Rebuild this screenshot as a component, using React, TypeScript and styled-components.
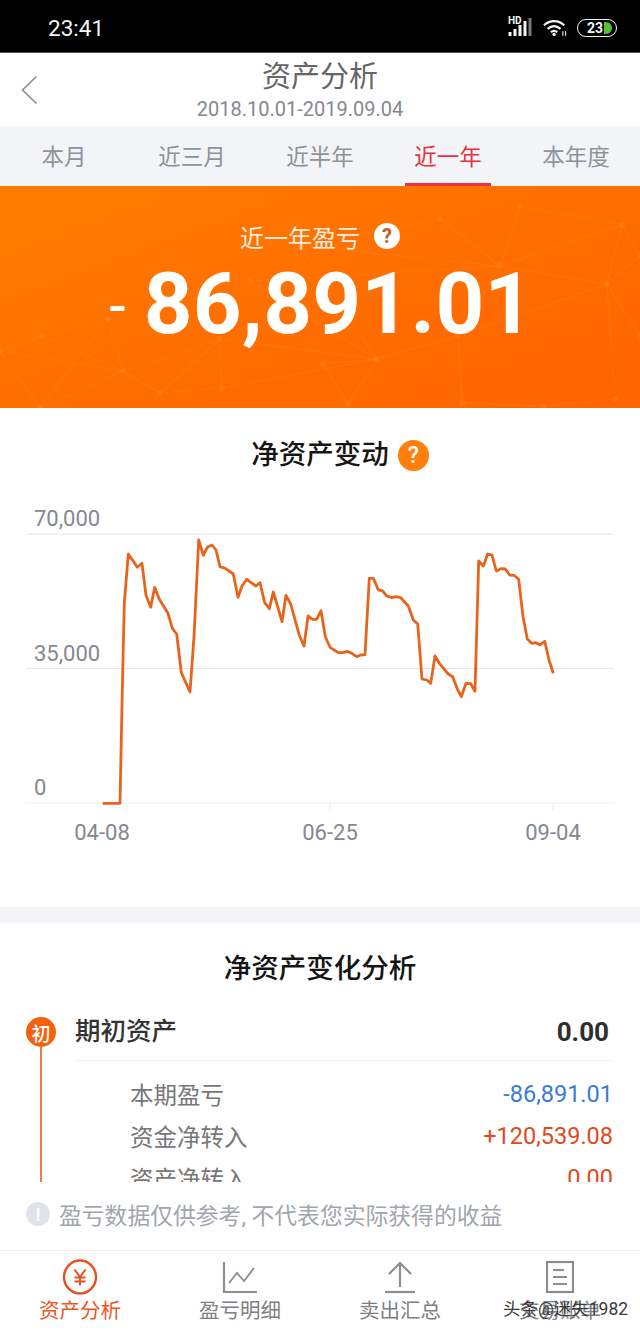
import styled, { createGlobalStyle } from "styled-components";

const GlobalStyle = createGlobalStyle`
  html, body {
    margin: 0;
    padding: 0;
    background: #fff;
  }
  body {
    font-family: Roboto, "Noto Sans CJK SC", sans-serif;
  }
  * {
    box-sizing: border-box;
  }
`;

const Page = styled.div`
  position: relative;
  width: 640px;
  height: 1332px;
  display: flex;
  flex-direction: column;
  overflow: hidden;
  background: #fff;
`;

const StatusBar = styled.div`
  height: 53px;
  flex: none;
  display: flex;
  align-items: center;
  justify-content: space-between;
  padding: 3px 23px 0 48px;
  background: #000;
  border-bottom: 1px solid #55565a;
  color: #f4f4f4;
`;

const Clock = styled.span`
  font-size: 22.5px;
`;

const StatusIcons = styled.div`
  display: flex;
  align-items: center;
  gap: 10px;
`;

const Signal = styled.div`
  position: relative;
  width: 25px;
  height: 19px;
`;

const HdMark = styled.span`
  position: absolute;
  left: 0;
  top: -2px;
  font-size: 10px;
  font-weight: 700;
  line-height: 9px;
`;

const Battery = styled.div`
  width: 40px;
  height: 18px;
  display: flex;
  align-items: center;
  gap: 1px;
  padding: 0 2px 0 9px;
  border: 1.5px solid #f4f4f4;
  border-radius: 9px;
  font-size: 14px;
  font-weight: 700;
  line-height: 1;
`;

const BatteryCap = styled.i`
  width: 8px;
  height: 12px;
  border-radius: 0 6px 6px 0;
  background: #52c22f;
`;

const Header = styled.header`
  position: relative;
  flex: none;
  height: 73px;
  display: flex;
  flex-direction: column;
  align-items: center;
  padding-top: 6px;
`;

const BackButton = styled.svg`
  position: absolute;
  left: 21px;
  top: 22px;
`;

const PageTitle = styled.h1`
  margin: 0;
  font-size: 29px;
  font-weight: 400;
  line-height: 36px;
  color: #666;
`;

const DateRange = styled.div`
  margin-top: 1px;
  padding-right: 40px;
  font-size: 20px;
  line-height: 26px;
  color: #85888f;
`;

const Tabs = styled.nav`
  flex: none;
  height: 60px;
  display: grid;
  grid-template-columns: repeat(5, 1fr);
  background: #f2f4f8;
`;

const Tab = styled.div<{ $active?: boolean }>`
  position: relative;
  display: flex;
  align-items: center;
  justify-content: center;
  padding-bottom: 3px;
  font-size: 22.5px;
  color: ${(p) => (p.$active ? "#e5323e" : "#8e929a")};

  &::after {
    content: "";
    display: ${(p) => (p.$active ? "block" : "none")};
    position: absolute;
    left: 21px;
    right: 21px;
    bottom: 0;
    height: 3px;
    background: #f0303c;
  }
`;

const Scroller = styled.main`
  flex: 1;
  min-height: 0;
  overflow: hidden;
`;

const Banner = styled.section`
  position: relative;
  height: 222px;
  overflow: hidden;
  display: flex;
  flex-direction: column;
  align-items: center;
  padding-top: 32px;
  background: linear-gradient(160deg, #ff7c00 0%, #ff6c00 60%, #ff6400 100%);
  color: #fff;
`;

const BannerMesh = styled.svg`
  position: absolute;
  inset: 0;
`;

const BannerLabel = styled.div`
  position: relative;
  display: flex;
  align-items: center;
  gap: 14px;
  height: 36px;
  font-size: 24px;
  color: #ffeedd;
`;

const BannerHelp = styled.span`
  width: 26px;
  height: 26px;
  display: flex;
  align-items: center;
  justify-content: center;
  border-radius: 50%;
  background: #fff;
  color: #c8551a;
  font-size: 20px;
  font-weight: 700;
`;

const Amount = styled.div`
  position: relative;
  display: flex;
  align-items: center;
  gap: 17px;
  margin-top: 4px;
  height: 92px;
  padding-left: 2px;
`;

const AmountSign = styled.span`
  font-size: 54px;
  font-weight: 500;
  line-height: 1;
  margin-top: 5px;
`;

const AmountValue = styled.span`
  font-size: 85px;
  font-weight: 700;
  line-height: 1;
  letter-spacing: 0.35px;
`;

const ChartCard = styled.section`
  height: 515px;
  padding-top: 27px;
  border-bottom: 16px solid #f4f5f8;
`;

const SectionTitle = styled.h2`
  position: relative;
  width: max-content;
  margin: 0 auto;
  font-size: 27.5px;
  font-weight: 500;
  line-height: 40px;
  color: #151515;
`;

const TitleHelp = styled.span`
  position: absolute;
  left: 100%;
  top: 5px;
  margin-left: 9px;
  width: 31px;
  height: 31px;
  display: flex;
  align-items: center;
  justify-content: center;
  border-radius: 50%;
  background: #ff7f0a;
  color: #fff;
  font-size: 23px;
  font-weight: 500;
`;

const ChartSvg = styled.svg`
  display: block;
  margin-top: 15px;
`;

const AxisText = styled.text`
  font-family: Roboto, sans-serif;
  font-size: 22px;
  fill: #85888f;
`;

const AnalysisCard = styled.section`
  padding-top: 26px;
`;

const Timeline = styled.div`
  display: flex;
  gap: 19px;
  margin-top: 28px;
  padding: 0 26px;
`;

const Rail = styled.div`
  flex: none;
  width: 30px;
  display: flex;
  flex-direction: column;
  align-items: center;
`;

const RailBadge = styled.span`
  flex: none;
  width: 30px;
  height: 30px;
  display: flex;
  align-items: center;
  justify-content: center;
  border-radius: 50%;
  background: #f4620f;
  color: #fff;
  font-size: 19px;
  font-weight: 500;
`;

const RailLine = styled.i`
  flex: 1;
  width: 2px;
  background: #f27a4a;
`;

const TimelineBody = styled.div`
  flex: 1;
  min-width: 0;
`;

const OpeningRow = styled.div`
  height: 44px;
  display: flex;
  justify-content: space-between;
  align-items: flex-start;
  padding-right: 5px;
  border-bottom: 1px solid #f0f0f2;
`;

const OpeningLabel = styled.span`
  font-size: 25.5px;
  font-weight: 500;
  line-height: 28px;
  color: #333;
`;

const OpeningValue = styled.span`
  font-size: 26px;
  font-weight: 700;
  line-height: 30px;
  color: #2e2e2e;
`;

const DetailList = styled.div`
  padding: 12px 1px 0 55px;
`;

const DetailRow = styled.div`
  height: 42px;
  display: flex;
  justify-content: space-between;
  align-items: center;
`;

const DetailLabel = styled.span`
  font-size: 23.5px;
  color: #777;
`;

const DetailValue = styled.span<{ $tone: "loss" | "gain" }>`
  font-size: 23.5px;
  color: ${(p) => (p.$tone === "loss" ? "#3a7dd0" : "#e04a1c")};
`;

const Notice = styled.div`
  flex: none;
  height: 68px;
  display: flex;
  align-items: center;
  gap: 9px;
  padding: 0 26px 4px;
`;

const NoticeIcon = styled.span`
  width: 24px;
  height: 24px;
  display: flex;
  align-items: center;
  justify-content: center;
  border-radius: 50%;
  background: #dfe3ec;
  color: #fff;
  font-size: 18px;
  font-weight: 700;
`;

const NoticeText = styled.span`
  font-size: 22.8px;
  color: #a1a5ae;
`;

const BottomNav = styled.nav`
  position: relative;
  flex: none;
  height: 82px;
  display: grid;
  grid-template-columns: repeat(4, 1fr);
  border-top: 1px solid #f1f1f3;
`;

const NavItem = styled.div<{ $active?: boolean }>`
  display: flex;
  flex-direction: column;
  align-items: center;
  padding-top: 8px;
  color: ${(p) => (p.$active ? "#e8561c" : "#7d7f84")};
  font-size: 20.5px;
  line-height: 28px;

  svg {
    display: block;
    margin-bottom: 2px;
  }
`;

const Watermark = styled.span`
  position: absolute;
  left: 503px;
  top: 44px;
  font-size: 17.5px;
  line-height: 28px;
  color: #3a3a3a;
  white-space: nowrap;
`;

const tabs = ["本月", "近三月", "近半年", "近一年", "本年度"];

const details: { label: string; value: string; tone: "loss" | "gain" }[] = [
  { label: "本期盈亏", value: "-86,891.01", tone: "loss" },
  { label: "资金净转入", value: "+120,539.08", tone: "gain" },
  { label: "资产净转入", value: "0.00", tone: "gain" },
];

// traced from the chart, in 3x zoom units of the 640 wide picture
const rawPoints = [
  [308, 940], [360, 940], [367, 600], [373, 340], [385, 192], [412, 232], [426, 220], [438, 316],
  [452, 352], [464, 292], [478, 328], [504, 370], [517, 415], [530, 432], [544, 548], [570, 606],
  [582, 440], [596, 150], [610, 196], [622, 172], [636, 165], [648, 180], [660, 230], [676, 235],
  [700, 252], [714, 322], [726, 288], [740, 268], [768, 288], [780, 278], [794, 338], [808, 356],
  [820, 306], [846, 395], [858, 316], [872, 342], [898, 436], [912, 468], [924, 378], [938, 388],
  [950, 388], [963, 362], [976, 440], [990, 472], [1015, 488], [1028, 488], [1042, 484], [1055, 490],
  [1070, 500], [1082, 495], [1095, 494], [1108, 265], [1120, 265], [1135, 300], [1147, 302],
  [1160, 318], [1175, 323], [1188, 320], [1202, 323], [1225, 348], [1240, 390], [1253, 402],
  [1266, 567], [1280, 570], [1292, 580], [1305, 498], [1318, 520], [1345, 552], [1358, 560],
  [1372, 597], [1384, 620], [1398, 580], [1412, 581], [1425, 604], [1436, 213], [1450, 228],
  [1463, 192], [1476, 195], [1489, 243], [1503, 236], [1516, 237], [1529, 255], [1542, 256],
  [1556, 268], [1569, 380], [1582, 447], [1595, 460], [1608, 458], [1620, 465], [1634, 454],
  [1647, 510], [1660, 550],
];

const chartLine = rawPoints.map(([x, y]) => `${(x / 3).toFixed(1)},${(y / 3).toFixed(1)}`).join(" ");

const meshNodes: [number, number][] = [
  [123, 185], [108, 133], [160, 207], [222, 202], [220, 153], [0, 165], [42, 150], [40, 222],
  [323, 178], [377, 173], [348, 218], [458, 150], [462, 217], [500, 80], [520, 20], [440, 33],
  [607, 98], [622, 39], [640, 70], [615, 213], [543, 220], [250, 95], [300, 60], [640, 150],
];

const meshEdges: [number, number][] = [
  [0, 1], [0, 2], [0, 4], [0, 6], [0, 7], [1, 6], [1, 7], [2, 3], [2, 4], [3, 4], [3, 9], [4, 9],
  [5, 6], [5, 7], [0, 5], [8, 9], [8, 10], [9, 10], [9, 21], [9, 22], [11, 12], [11, 9], [11, 13],
  [13, 14], [13, 15], [13, 16], [13, 17], [13, 22], [14, 17], [16, 17], [16, 18], [17, 18], [16, 23],
  [16, 11], [15, 22], [21, 13], [12, 20], [19, 20], [16, 19],
];

const QuestionMark = "?";

const App = () => {
  return (
    <Page>
      <GlobalStyle />
      <StatusBar>
        <Clock>23:41</Clock>
        <StatusIcons>
          <Signal>
            <HdMark>HD</HdMark>
            <svg width="25" height="19" viewBox="0 0 25 19">
              <rect x="0.5" y="14" width="3" height="4" fill="#f4f4f4" />
              <rect x="5.5" y="11" width="3" height="7" fill="#f4f4f4" />
              <rect x="10.5" y="7" width="3" height="11" fill="#f4f4f4" />
              <rect x="15.5" y="3" width="3" height="15" fill="#f4f4f4" />
              <rect x="20.5" y="0" width="3" height="18" fill="#77787a" />
            </svg>
          </Signal>
          <svg width="24" height="18" viewBox="0 0 26 19" fill="none" stroke="#f4f4f4" strokeWidth="2.4">
            <path d="M1 6.5C7.5 0.5 16.5 0.5 23 6.5" />
            <path d="M5 10.5C9.5 6.5 14.5 6.5 19 10.5" />
            <path d="M8.5 14C11 12 13 12 15.5 14" />
            <circle cx="12" cy="16.5" r="1.8" fill="#f4f4f4" stroke="none" />
            <path d="M21.5 13v5M24.5 13v5" strokeWidth="1.2" />
          </svg>
          <Battery>
            23
            <BatteryCap />
          </Battery>
        </StatusIcons>
      </StatusBar>

      <Header>
        <BackButton width="17" height="30" viewBox="0 0 17 30" fill="none" stroke="#8c8c8c" strokeWidth="1.6">
          <path d="M15.5 1.5L1.5 15L15.5 28.5" />
        </BackButton>
        <PageTitle>资产分析</PageTitle>
        <DateRange>2018.10.01-2019.09.04</DateRange>
      </Header>

      <Tabs>
        {tabs.map((tab) => (
          <Tab key={tab} $active={tab === "近一年"}>
            {tab}
          </Tab>
        ))}
      </Tabs>

      <Scroller>
        <Banner>
          <BannerMesh width="640" height="222" viewBox="0 0 640 222">
            <g stroke="#ffa040" strokeOpacity="0.16" strokeWidth="1.2">
              {meshEdges.map(([a, b]) => (
                <line key={`${a}-${b}`} x1={meshNodes[a][0]} y1={meshNodes[a][1]} x2={meshNodes[b][0]} y2={meshNodes[b][1]} />
              ))}
            </g>
            <g fill="#ffa040" fillOpacity="0.22">
              {meshNodes.map(([x, y]) => (
                <circle key={`${x}-${y}`} cx={x} cy={y} r="3" />
              ))}
            </g>
          </BannerMesh>
          <BannerLabel>
            近一年盈亏
            <BannerHelp>{QuestionMark}</BannerHelp>
          </BannerLabel>
          <Amount>
            <AmountSign>-</AmountSign>
            <AmountValue>86,891.01</AmountValue>
          </Amount>
        </Banner>

        <ChartCard>
          <SectionTitle>
            净资产变动
            <TitleHelp>{QuestionMark}</TitleHelp>
          </SectionTitle>
          <ChartSvg width="640" height="360" viewBox="0 0 640 360">
            <g stroke="#e6e6e8" strokeWidth="1.2">
              <line x1="26" y1="44" x2="614" y2="44" />
              <line x1="26" y1="178.5" x2="614" y2="178.5" />
            </g>
            <g stroke="#f0f0f2" strokeWidth="1.2">
              <line x1="26" y1="313" x2="614" y2="313" />
              <line x1="330" y1="313" x2="330" y2="320" />
              <line x1="553" y1="313" x2="553" y2="320" />
            </g>
            <AxisText x="34" y="36">70,000</AxisText>
            <AxisText x="34" y="171">35,000</AxisText>
            <AxisText x="34" y="305">0</AxisText>
            <AxisText x="102" y="350" textAnchor="middle">04-08</AxisText>
            <AxisText x="330" y="350" textAnchor="middle">06-25</AxisText>
            <AxisText x="553" y="350" textAnchor="middle">09-04</AxisText>
            <polyline points={chartLine} fill="none" stroke="#e8641c" strokeWidth="2.8" strokeLinejoin="round" />
          </ChartSvg>
        </ChartCard>

        <AnalysisCard>
          <SectionTitle>净资产变化分析</SectionTitle>
          <Timeline>
            <Rail>
              <RailBadge>初</RailBadge>
              <RailLine />
            </Rail>
            <TimelineBody>
              <OpeningRow>
                <OpeningLabel>期初资产</OpeningLabel>
                <OpeningValue>0.00</OpeningValue>
              </OpeningRow>
              <DetailList>
                {details.map((row) => (
                  <DetailRow key={row.label}>
                    <DetailLabel>{row.label}</DetailLabel>
                    <DetailValue $tone={row.tone}>{row.value}</DetailValue>
                  </DetailRow>
                ))}
              </DetailList>
            </TimelineBody>
          </Timeline>
        </AnalysisCard>
      </Scroller>

      <Notice>
        <NoticeIcon>!</NoticeIcon>
        <NoticeText>盈亏数据仅供参考, 不代表您实际获得的收益</NoticeText>
      </Notice>

      <BottomNav>
        <NavItem $active>
          <svg width="36" height="36" viewBox="0 0 36 36" fill="none" stroke="#e8501c" strokeWidth="2.4">
            <ellipse cx="18" cy="18" rx="16" ry="16.5" />
            <path d="M12.5 10.5L18 18L23.5 10.5M18 18V26.5M12.5 18.5H23.5M12.5 22.5H23.5" strokeWidth="2" />
          </svg>
          资产分析
        </NavItem>
        <NavItem>
          <svg width="36" height="36" viewBox="0 0 36 36" fill="none" stroke="#8c8e92" strokeWidth="2.2">
            <path d="M2 3V33H35" />
            <path d="M7 24L15 14L22 22L32 9" strokeWidth="1.8" />
          </svg>
          盈亏明细
        </NavItem>
        <NavItem>
          <svg width="36" height="36" viewBox="0 0 36 36" fill="none" stroke="#8c8e92" strokeWidth="2.2">
            <path d="M18 4V28M7 15L18 4L29 15" />
            <path d="M3 33H33" />
          </svg>
          卖出汇总
        </NavItem>
        <NavItem>
          <svg width="36" height="36" viewBox="0 0 36 36" fill="none" stroke="#8c8e92" strokeWidth="2.2">
            <rect x="5" y="3" width="26" height="30" />
            <path d="M11 11H22M11 18H25M11 25H25" />
          </svg>
          交易账单
        </NavItem>
        <Watermark>头条@迷失1982</Watermark>
      </BottomNav>
    </Page>
  );
};

export default App;
